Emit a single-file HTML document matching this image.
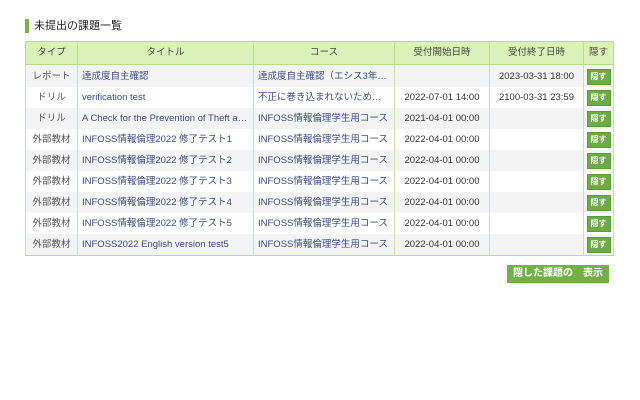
<!DOCTYPE html>
<html><head><meta charset="utf-8"><style>
body{margin:0;background:#fff;font-family:"Liberation Sans","Noto Sans CJK JP",sans-serif;font-size:9.5px;color:#444}
.h{position:absolute;left:25px;top:19px;height:14px;border-left:4px solid #7cb342;padding-left:5px;font-size:11px;line-height:14px;color:#222}
table{position:absolute;left:25px;top:41px;border-collapse:collapse;width:588px;table-layout:fixed;border:1px solid #b7dc8c}
th{background:#daf2b9;border:1px solid #b7dc8c;height:22px;padding:0;font-weight:normal;color:#444;font-size:9.5px;line-height:12px}
td{border-left:1px solid #c9e3a6;border-right:1px solid #c9e3a6;height:21px;padding:0 4px;white-space:nowrap;overflow:hidden;text-overflow:ellipsis;line-height:12px;vertical-align:middle}
tr:nth-child(odd) td{background:#f4f4f4}
tr:first-child td{padding-top:1px}
tr:last-child td{border-bottom:1px solid #b7dc8c}
td.c{text-align:center;color:#555}
td.t{color:#3b4a86}
td.d{text-align:center;color:#333}
td.x{padding:0 2px}
.b{display:inline-block;background:#6eab45;color:#fff;font-size:8px;font-weight:bold;padding:1px 3px;border:1px solid #5d9a38;line-height:12px;vertical-align:middle}
.btn{position:absolute;left:507px;top:265px;width:102px;height:18px;background:#72b049;color:#fff;font-size:10px;line-height:18px;text-align:center;font-weight:bold}
</style></head><body>
<div class="h">未提出の課題一覧</div>
<table>
<colgroup><col style="width:52px"><col style="width:176px"><col style="width:141px"><col style="width:95px"><col style="width:94px"><col style="width:30px"></colgroup>
<thead><tr><th>タイプ</th><th>タイトル</th><th>コース</th><th>受付開始日時</th><th>受付終了日時</th><th>隠す</th></tr></thead>
<tbody>
<tr><td class="c">レポート</td><td class="t">達成度自主確認</td><td class="t">達成度自主確認（エシス3年2022年度）</td><td class="d"></td><td class="d">2023-03-31 18:00</td><td class="c x"><span class="b">隠す</span></td></tr>
<tr><td class="c">ドリル</td><td class="t">verification test</td><td class="t">不正に巻き込まれないために（テスト）</td><td class="d">2022-07-01 14:00</td><td class="d">2100-03-31 23:59</td><td class="c x"><span class="b">隠す</span></td></tr>
<tr><td class="c">ドリル</td><td class="t">A Check for the Prevention of Theft and Loss</td><td class="t">INFOSS情報倫理学生用コース</td><td class="d">2021-04-01 00:00</td><td class="d"></td><td class="c x"><span class="b">隠す</span></td></tr>
<tr><td class="c">外部教材</td><td class="t">INFOSS情報倫理2022 修了テスト1</td><td class="t">INFOSS情報倫理学生用コース</td><td class="d">2022-04-01 00:00</td><td class="d"></td><td class="c x"><span class="b">隠す</span></td></tr>
<tr><td class="c">外部教材</td><td class="t">INFOSS情報倫理2022 修了テスト2</td><td class="t">INFOSS情報倫理学生用コース</td><td class="d">2022-04-01 00:00</td><td class="d"></td><td class="c x"><span class="b">隠す</span></td></tr>
<tr><td class="c">外部教材</td><td class="t">INFOSS情報倫理2022 修了テスト3</td><td class="t">INFOSS情報倫理学生用コース</td><td class="d">2022-04-01 00:00</td><td class="d"></td><td class="c x"><span class="b">隠す</span></td></tr>
<tr><td class="c">外部教材</td><td class="t">INFOSS情報倫理2022 修了テスト4</td><td class="t">INFOSS情報倫理学生用コース</td><td class="d">2022-04-01 00:00</td><td class="d"></td><td class="c x"><span class="b">隠す</span></td></tr>
<tr><td class="c">外部教材</td><td class="t">INFOSS情報倫理2022 修了テスト5</td><td class="t">INFOSS情報倫理学生用コース</td><td class="d">2022-04-01 00:00</td><td class="d"></td><td class="c x"><span class="b">隠す</span></td></tr>
<tr><td class="c">外部教材</td><td class="t">INFOSS2022 English version test5</td><td class="t">INFOSS情報倫理学生用コース</td><td class="d">2022-04-01 00:00</td><td class="d"></td><td class="c x"><span class="b">隠す</span></td></tr>
</tbody></table>
<div class="btn">隠した課題の　表示</div>
</body></html>
